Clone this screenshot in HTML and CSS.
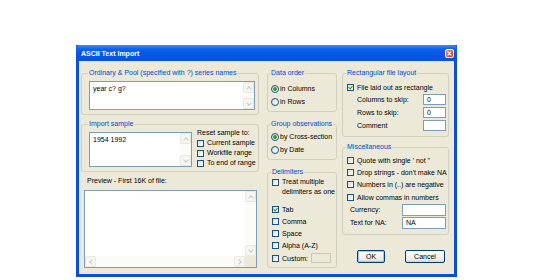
FILE: index.html
```html
<!DOCTYPE html>
<html lang="en">
  <head>
    <meta charset="UTF-8" />
    <title>ASCII Text Import</title>
    <link rel="stylesheet" href="styles.css">
  </head>
  <body>
    <div class="dialog">
      <div class="titlebar">
        <span class="title">ASCII Text Import</span>
        <span class="close">
          <svg width="9" height="9" viewBox="0 0 9 9"><path d="M2.5 2.5 L6.5 6.5 M6.5 2.5 L2.5 6.5" stroke="#fff" stroke-width="1.4" stroke-linecap="round"/></svg>
        </span>
      </div>
      <div class="client">
        <div class="col col-left">
          <fieldset class="grp grp-names">
            <legend>Ordinary &amp; Pool (specified with ?) series names</legend>
            <div class="textbox tb-names">
              <div class="tb-text">year c? g?</div>
              <div class="vscroll"><span class="sb-btn up"></span><span class="sb-track"></span><span class="sb-btn down"></span></div>
            </div>
          </fieldset>
          <fieldset class="grp grp-sample">
            <legend>Import sample</legend>
            <div class="sample-row">
              <div class="textbox tb-sample">
                <div class="tb-text">1954 1992</div>
                <div class="vscroll"><span class="sb-btn up"></span><span class="sb-track"></span><span class="sb-btn down"></span></div>
              </div>
              <div class="reset">
                <div class="reset-title">Reset sample to:</div>
                <div class="chk"><span class="box"></span>Current sample</div>
                <div class="chk"><span class="box"></span>Workfile range</div>
                <div class="chk"><span class="box"></span>To end of range</div>
              </div>
            </div>
          </fieldset>
          <div class="preview-label">Preview - First 16K of file:</div>
          <div class="textbox tb-preview">
            <div class="pv-main">
              <div class="tb-text"></div>
              <div class="vscroll"><span class="sb-btn up"></span><span class="sb-track"></span><span class="sb-btn down"></span></div>
            </div>
            <div class="pv-bottom">
              <div class="hscroll"><span class="sb-btn left"></span><span class="sb-track"></span><span class="sb-btn right"></span></div>
              <span class="sb-corner"></span>
            </div>
          </div>
        </div>

        <div class="col col-mid">
          <fieldset class="grp grp-order">
            <legend>Data order</legend>
            <div class="opt"><span class="radio on"></span>in Columns</div>
            <div class="opt"><span class="radio"></span>in Rows</div>
          </fieldset>
          <fieldset class="grp grp-obs">
            <legend>Group observations</legend>
            <div class="opt"><span class="radio on"></span>by Cross-section</div>
            <div class="opt"><span class="radio"></span>by Date</div>
          </fieldset>
          <fieldset class="grp grp-delim">
            <legend>Delimiters</legend>
            <div class="chk chk-multi"><span class="box"></span><span>Treat multiple<br>delimiters as one</span></div>
            <div class="chk row"><span class="box on"></span>Tab</div>
            <div class="chk row"><span class="box"></span>Comma</div>
            <div class="chk row"><span class="box"></span>Space</div>
            <div class="chk row"><span class="box"></span>Alpha (A-Z)</div>
            <div class="chk row"><span class="box"></span>Custom:<span class="field custom-field"></span></div>
          </fieldset>
        </div>

        <div class="col col-right">
          <fieldset class="grp grp-rect">
            <legend>Rectangular file layout</legend>
            <div class="chk rect-chk"><span class="box on"></span>File laid out as rectangle</div>
            <div class="skip-row"><span>Columns to skip:</span><span class="field skip-field">0</span></div>
            <div class="skip-row"><span>Rows to skip:</span><span class="field skip-field">0</span></div>
            <div class="skip-row"><span>Comment</span><span class="field skip-field"></span></div>
          </fieldset>
          <fieldset class="grp grp-misc">
            <legend>Miscellaneous</legend>
            <div class="misc-list">
              <div class="chk row"><span class="box"></span>Quote with single ' not "</div>
              <div class="chk row"><span class="box"></span>Drop strings - don't make NA</div>
              <div class="chk row"><span class="box"></span>Numbers in (..) are negative</div>
              <div class="chk row"><span class="box"></span>Allow commas in numbers</div>
            </div>
            <div class="misc-row"><span>Currency:</span><span class="field misc-field"></span></div>
            <div class="misc-row"><span>Text for NA:</span><span class="field misc-field">NA</span></div>
          </fieldset>
          <div class="buttons">
            <button type="button" class="btn btn-ok">OK</button>
            <button type="button" class="btn btn-cancel">Cancel</button>
          </div>
        </div>
      </div>
    </div>
  </body>
</html>
```

FILE: styles.css
```css
body {
  margin: 0;
  background: #fff;
  font-family: 'Liberation Sans', Arial, sans-serif;
  font-size: 7px;
  color: #000;
}
.dialog {
  margin: 45px 0 0 76px;
  width: 381px;
  height: 232px;
  box-sizing: border-box;
  background: #ece9d8;
  border: 3px solid #0a4fd8;
  border-top: none;
  display: flex;
  flex-direction: column;
}
.titlebar {
  height: 16px;
  margin: 0 -3px;
  background: linear-gradient(#3f8df8 0, #0d62ec 25%, #0556e6 60%, #0751dd 100%);
  border-radius: 4px 4px 0 0;
  display: flex;
  align-items: center;
  justify-content: space-between;
  padding: 0 3px 0 5px;
}
.title {
  color: #fff;
  font-weight: bold;
  font-size: 7px;
}
.close {
  width: 9px;
  height: 9px;
  background: linear-gradient(135deg, #f19a7c, #e1502c 60%, #c8401d);
  border: 1px solid #fff;
  border-radius: 2px;
  box-sizing: border-box;
  display: flex;
}
.close svg { width: 7px; height: 7px; }
.client {
  flex: 1;
  display: flex;
  padding: 7px 0 0 2px;
}
.col {
  display: flex;
  flex-direction: column;
}
.col-left { width: 178px; }
.col-mid { width: 70px; margin-left: 8px; }
.col-right { width: 107px; margin-left: 5px; }

.grp {
  margin: 0;
  padding: 0 2px 0 7px;
  border: 1px solid #d0d0bf;
  border-radius: 3px;
  box-sizing: border-box;
  min-width: 0;
}
.grp legend {
  color: #0046d5;
  padding: 0 1px;
  margin-left: -1px;
  line-height: 10px;
  white-space: nowrap;
}
.grp-names { height: 47px; }
.grp-sample { height: 53px; margin-top: 4px; }
.grp-order { height: 44px; padding-left: 3px; }
.grp-obs { height: 41px; margin-top: 7px; padding-left: 3px; }
.grp-delim { height: 101px; margin-top: 7px; padding-left: 4px; }
.grp-rect { height: 69px; padding-left: 4px; }
.grp-misc { height: 93px; margin-top: 5px; padding-left: 4px; }

.textbox {
  background: #fff;
  border: 1px solid #7f9db9;
  box-sizing: border-box;
  display: flex;
}
.tb-text {
  flex: 1;
  padding: 2px 3px;
  line-height: 9px;
}
.tb-names { width: 166px; height: 29px; margin-top: 3px; }
.sample-row { display: flex; margin-top: 3px; }
.tb-sample { width: 103px; height: 35px; }
.reset { margin: -4px 0 0 5px; line-height: 10px; }
.reset .chk { height: 10px; }

.vscroll {
  width: 11px;
  display: flex;
  flex-direction: column;
  background: #fbfbf8;
}
.sb-track { flex: 1; }
.sb-btn {
  width: 11px;
  height: 11px;
  box-sizing: border-box;
  border: 1px solid #e8e7e0;
  border-radius: 2px;
  background: #f7f6f1;
  position: relative;
}
.sb-btn::after {
  content: '';
  position: absolute;
  left: 3px;
  top: 3px;
  width: 3px;
  height: 3px;
  border-left: 1px solid #c5cad6;
  border-top: 1px solid #c5cad6;
}
.sb-btn.up::after { transform: rotate(45deg); top: 4px; }
.sb-btn.down::after { transform: rotate(225deg); top: 2px; }
.sb-btn.left::after { transform: rotate(-45deg); left: 4px; }
.sb-btn.right::after { transform: rotate(135deg); left: 2px; }

.preview-label {
  line-height: 10px;
  margin: 4px 0 0 6px;
}
.tb-preview {
  width: 173px;
  height: 78px;
  margin: 4px 0 0 3px;
  flex-direction: column;
}
.pv-main { flex: 1; display: flex; }
.pv-bottom { display: flex; height: 11px; }
.hscroll { flex: 1; display: flex; background: #fbfbf8; }
.sb-corner { width: 11px; background: #ece9d8; }

.chk, .opt {
  display: flex;
  align-items: center;
  white-space: nowrap;
}
.opt { height: 13px; }
.grp-order .opt:first-of-type { margin-top: 4px; }
.grp-obs .opt:first-of-type { margin-top: 1px; }
.radio {
  width: 8px;
  height: 8px;
  box-sizing: border-box;
  border: 1px solid #1c5180;
  border-radius: 50%;
  background: linear-gradient(135deg, #dcdcd5, #fff);
  margin-right: 1px;
  display: flex;
  align-items: center;
  justify-content: center;
}
.radio.on::after {
  content: '';
  width: 4px;
  height: 4px;
  border-radius: 50%;
  background: #2fa02f;
}
.box {
  width: 7px;
  height: 7px;
  box-sizing: border-box;
  border: 1px solid #1c5180;
  background: linear-gradient(135deg, #dcdcd5, #fff);
  margin-right: 3px;
  flex: none;
  position: relative;
}
.box.on::after {
  content: '';
  position: absolute;
  left: 1px;
  top: 0;
  width: 2px;
  height: 3px;
  border-right: 1px solid #21a121;
  border-bottom: 1px solid #21a121;
  transform: rotate(40deg);
}
.chk-multi { align-items: flex-start; line-height: 10px; }
.chk-multi .box { margin-top: 2px; }
.grp-delim .row { height: 12.25px; }
.grp-delim .row:nth-of-type(2) { margin-top: 6px; }
.field {
  background: #fff;
  border: 1px solid #7f9db9;
  box-sizing: border-box;
  line-height: 9px;
  padding-left: 3px;
}
.custom-field {
  width: 20px;
  height: 10px;
  margin-left: 3px;
  border-color: #c9c7ba;
  background: #ece9d8;
}
.rect-chk { height: 12px; margin-top: 3px; }
.skip-row {
  height: 13px;
  display: flex;
  align-items: center;
  justify-content: space-between;
  padding-left: 10px;
}
.skip-field { width: 23px; height: 11px; }
.misc-list { margin-top: 2px; }
.grp-misc .row { height: 12.3px; }
.misc-row {
  height: 13px;
  display: flex;
  align-items: center;
  justify-content: space-between;
  padding-left: 3px;
}
.misc-field { width: 44px; height: 12px; }

.buttons {
  display: flex;
  margin-top: 15px;
  padding-left: 15px;
  gap: 20px;
}
.btn {
  height: 13px;
  padding: 0;
  font-family: inherit;
  font-size: 7px;
  background: linear-gradient(#fff, #ecebe6 80%, #d6d0c5);
  border: 1px solid #003c74;
  border-radius: 2px;
}
.btn-ok { width: 28px; box-shadow: inset 0 0 0 1px #a8c2ef; }
.btn-cancel { width: 40px; }
```
